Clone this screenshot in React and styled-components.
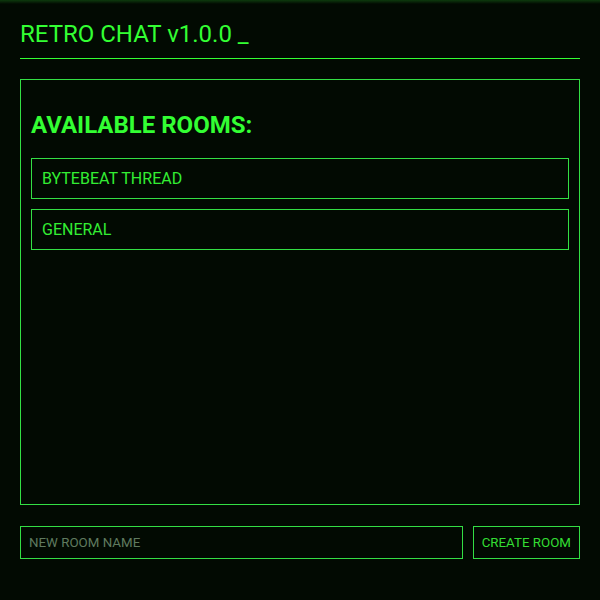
import styled, { createGlobalStyle } from "styled-components";

const GlobalStyle = createGlobalStyle`
  html, body {
    margin: 0;
    padding: 0;
    background: #020a02;
  }
  body {
    font-family: Roboto, "Liberation Sans", sans-serif;
    color: #33ff33;
  }
  * {
    box-sizing: border-box;
  }
`;

const Screen = styled.div`
  height: 600px;
  padding: 20px 20px 41px;
  display: flex;
  flex-direction: column;
  background: linear-gradient(to bottom, #0d3a0d 0px, #020a02 4px);
`;

const Header = styled.div`
  font-size: 24px;
  line-height: 28px;
  padding-bottom: 10px;
  border-bottom: 1px solid #33ff33;
  color: #33ff33;
`;

const Panel = styled.div`
  flex: 1;
  margin-top: 20px;
  border: 1px solid #33e044;
  padding: 0 10px 10px;
  display: flex;
  flex-direction: column;
`;

const Heading = styled.h2`
  font-size: 24px;
  font-weight: 700;
  line-height: 28px;
  margin: 31px 0 19px;
  color: #33ff33;
`;

const RoomList = styled.div`
  display: flex;
  flex-direction: column;
  gap: 10px;
`;

const Room = styled.div`
  border: 1px solid #33e044;
  padding: 10px;
  font-size: 16px;
  line-height: 19px;
  color: #33ee33;
  cursor: pointer;
`;

const Form = styled.div`
  margin-top: 21px;
  display: flex;
  gap: 10px;
  height: 33px;
`;

const Input = styled.input`
  flex: 1;
  background: transparent;
  border: 1px solid #33dd44;
  padding: 0 8px;
  font-family: Roboto, "Liberation Sans", sans-serif;
  font-size: 13.333px;
  color: #33ff33;
  outline: none;

  &::placeholder {
    color: #5f7a5f;
  }
`;

const Button = styled.button`
  background: transparent;
  border: 1px solid #33dd44;
  padding: 0 8px;
  font-family: Roboto, "Liberation Sans", sans-serif;
  font-size: 13.333px;
  color: #33dd33;
  cursor: pointer;
`;

const rooms = ["BYTEBEAT THREAD", "GENERAL"];

const App = () => {
  return (
    <>
      <GlobalStyle />
      <Screen>
        <Header>RETRO CHAT v1.0.0 _</Header>
        <Panel>
          <Heading>AVAILABLE ROOMS:</Heading>
          <RoomList>
            {rooms.map((name) => (
              <Room key={name}>{name}</Room>
            ))}
          </RoomList>
        </Panel>
        <Form>
          <Input placeholder="NEW ROOM NAME" />
          <Button>CREATE ROOM</Button>
        </Form>
      </Screen>
    </>
  );
};

export default App;
